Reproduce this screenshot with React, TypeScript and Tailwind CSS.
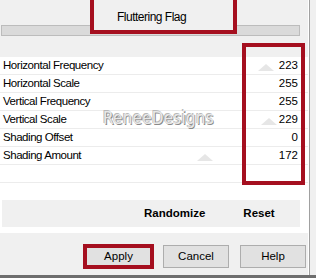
import React from "react";

const rows: [string, string][] = [
  ["Horizontal Frequency", "223"],
  ["Horizontal Scale", "255"],
  ["Vertical Frequency", "255"],
  ["Vertical Scale", "229"],
  ["Shading Offset", "0"],
  ["Shading Amount", "172"],
  ["", ""],
];

function Tri({ className }: { className: string }) {
  return (
    <svg className={`absolute ${className}`} width="16" height="7" viewBox="0 0 16 7">
      <polygon points="0,7 8,0 16,7" fill="#e6e6e6" />
    </svg>
  );
}

export default function App() {
  return (
    <div className="relative w-[316px] h-[278px] overflow-hidden bg-[#f0f0f0] text-[11px] text-black font-['Liberation_Sans',Arial,sans-serif]">
      <div className="flex h-[275px]">
        <div className="w-[308px] flex flex-col">
          {/* top region */}
          <div className="h-[57px] pt-[25px] pl-[1px]">
            <div className="w-[299px] h-[11px] border border-[#bcbcbc] bg-[#dadada]" />
          </div>
          {/* white panel */}
          <div className="relative h-[176px] bg-white flex flex-col">
            {rows.map(([label, value], i) => (
              <div
                key={i}
                className="h-[18px] flex items-center justify-between pl-[3px] pr-[10px] border-b border-[#ececec]"
              >
                <span className="text-[11.5px] tracking-[-0.45px]">{label}</span>
                <span className="text-[11.5px]">{value}</span>
              </div>
            ))}
            <div className="h-[16px]" />
            <div className="ml-[1px] w-[299px] h-[28px] bg-[#f0f0f0] border-l border-t border-white flex items-center">
              <span className="ml-[142px] font-bold text-[11.5px]">Randomize</span>
              <span className="ml-[38px] font-bold text-[11.5px]">Reset</span>
            </div>
            <Tri className="left-[258px] top-[7px]" />
            <Tri className="left-[261px] top-[61px]" />
            <Tri className="left-[197px] top-[97px]" />
            <div className="absolute left-[103px] top-[49px] text-[17px] tracking-[0.2px] text-[#e8e8e8] [text-shadow:1px_1px_0_#8a8a8a,-1px_-1px_0_#b8b8b8] font-['DejaVu_Sans',sans-serif] scale-x-[0.9] origin-left">
              ReneeDesigns
            </div>
          </div>
          {/* bottom bar */}
          <div className="flex-1 flex items-start pt-[11px]">
            <div className="ml-[83px] w-[71px] h-[25px] border-[4px] border-[#a50f1f] flex">
              <button className="flex-1 bg-[#e1e1e1] text-[11.5px] leading-none">Apply</button>
            </div>
            <button className="ml-[9px] mt-[1px] w-[66px] h-[23px] border border-[#adadad] bg-[#e1e1e1] text-[11.5px]">
              Cancel
            </button>
            <button className="ml-[11px] mt-[1px] w-[66px] h-[23px] border border-[#adadad] bg-[#e1e1e1] text-[11.5px]">
              Help
            </button>
          </div>
        </div>
        <div className="w-px bg-white" />
        <div className="w-px bg-[#a0a0a0]" />
        <div className="flex-1" />
      </div>
      <div className="h-[3px] bg-[#6e6e6e]" />

      {/* overlay highlight boxes */}
      <div className="absolute left-[90px] top-[-4px] w-[147px] h-[38px] border-[4px] border-[#a50f1f] bg-[#f0f0f0] flex items-center pl-[23px] pt-[3px]">
        <span className="text-[12px] tracking-[-0.5px]">Fluttering Flag</span>
      </div>
      <div className="absolute left-[242px] top-[43px] w-[63px] h-[142px] border-[4px] border-[#a50f1f]" />
    </div>
  );
}
